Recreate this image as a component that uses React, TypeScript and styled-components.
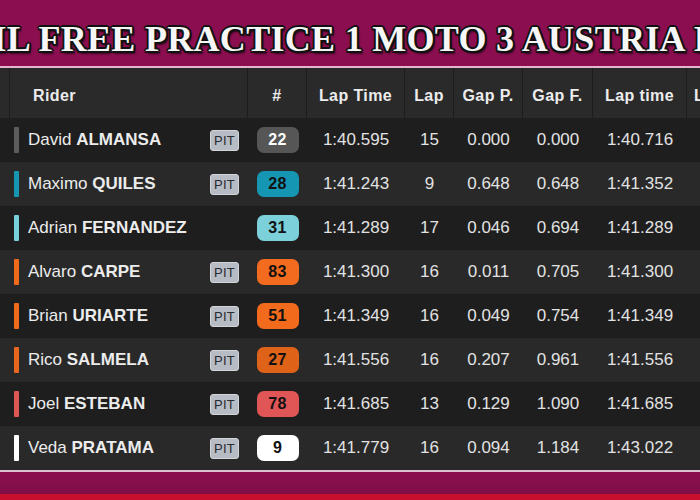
import React from "react";
import styled, { createGlobalStyle } from "styled-components";

const Global = createGlobalStyle`
  html, body { margin: 0; padding: 0; background: #8a0d4f; }
  body { width: 700px; height: 500px; overflow: hidden; font-family: "Liberation Sans", Arial, sans-serif; }
`;

const Page = styled.div`
  width: 700px;
  height: 500px;
  display: flex;
  flex-direction: column;
  overflow: hidden;
  background: #8a0d4f;
`;

const TitleBand = styled.div`
  height: 66px;
  flex: none;
  display: flex;
  justify-content: center;
  align-items: center;
  overflow: hidden;
  background: #8b0e50;
  border-bottom: 2px solid #e3b6cc;
`;

const Title = styled.h1`
  margin: 12px 0 0 0;
  flex: none;
  white-space: nowrap;
  font-family: "Liberation Serif", "Times New Roman", serif;
  font-weight: 700;
  font-size: 36px;
  letter-spacing: 0.3px;
  color: #f6f6f6;
  text-shadow:
    2px 0 0 #111, -2px 0 0 #111, 0 2px 0 #111, 0 -2px 0 #111,
    1.5px 1.5px 0 #111, -1.5px 1.5px 0 #111, 1.5px -1.5px 0 #111, -1.5px -1.5px 0 #111,
    2px 3px 2px rgba(0, 0, 0, 0.6);
`;

const COLS = "10px 238px 59px 98px 49px 69px 70px 94px 1fr";

const Table = styled.div`
  flex: none;
  display: flex;
  flex-direction: column;
  width: 700px;
`;

const HeadRow = styled.div`
  display: grid;
  grid-template-columns: ${COLS};
  height: 50px;
  background: #2a2a2a;
`;

const HeadCell = styled.div<{ $left?: boolean }>`
  display: flex;
  align-items: center;
  justify-content: ${(p) => (p.$left ? "flex-start" : "center")};
  padding-left: ${(p) => (p.$left ? "23px" : "0")};
  padding-top: 5px;
  border-right: 1px solid #1d1d1d;
  color: #ececec;
  font-weight: 700;
  font-size: 16px;
  letter-spacing: 0.4px;
  white-space: nowrap;
  overflow: hidden;
  &:last-child {
    justify-content: flex-start;
    padding-left: 7px;
    border-right: none;
  }
`;

const Row = styled.div<{ $alt: boolean }>`
  display: grid;
  grid-template-columns: ${COLS};
  height: 44px;
  background: ${(p) => (p.$alt ? "#292929" : "#1e1e1e")};
`;

const RiderCell = styled.div`
  display: flex;
  align-items: center;
  padding: 0 9px 0 4px;
`;

const Bar = styled.span<{ $c: string }>`
  width: 5px;
  height: 26px;
  border-radius: 1px;
  background: ${(p) => p.$c};
  flex: none;
`;

const Name = styled.span`
  margin-left: 9px;
  color: #ececec;
  font-size: 17px;
  white-space: nowrap;
  b { font-weight: 700; }
`;

const Pit = styled.span`
  margin-left: auto;
  width: 29px;
  height: 21px;
  box-sizing: border-box;
  display: flex;
  align-items: center;
  justify-content: center;
  background: #b7bbc3;
  border: 1px solid #d2d5da;
  border-radius: 3px;
  color: #262a32;
  font-size: 13px;
  letter-spacing: 0.2px;
`;

const NumCell = styled.div`
  display: flex;
  align-items: center;
  justify-content: center;
`;

const NumBadge = styled.span<{ $bg: string; $fg: string }>`
  width: 42px;
  height: 26px;
  border-radius: 7px;
  display: flex;
  align-items: center;
  justify-content: center;
  background: ${(p) => p.$bg};
  color: ${(p) => p.$fg};
  font-weight: 700;
  font-size: 16px;
  letter-spacing: 0.3px;
`;

const Cell = styled.div`
  display: flex;
  align-items: center;
  justify-content: center;
  color: #e2e2e2;
  font-size: 17px;
  white-space: nowrap;
`;

const BottomLine = styled.div`
  height: 2px;
  flex: none;
  background: #d9c2cd;
`;

const BottomBand = styled.div`
  flex: 1;
  background: linear-gradient(#8b0e4e, #800f48);
`;

const RedStrip = styled.div`
  height: 6px;
  flex: none;
  background: #c8102e;
`;

type R = {
  first: string; last: string; pit: boolean; num: string;
  bar: string; bg: string; fg: string;
  lt: string; lap: string; gp: string; gf: string; lt2: string;
};

const rows: R[] = [
  { first: "David", last: "ALMANSA", pit: true, num: "22", bar: "#5c5c5c", bg: "#565656", fg: "#ffffff", lt: "1:40.595", lap: "15", gp: "0.000", gf: "0.000", lt2: "1:40.716" },
  { first: "Maximo", last: "QUILES", pit: true, num: "28", bar: "#1596b3", bg: "#1597b4", fg: "#111111", lt: "1:41.243", lap: "9", gp: "0.648", gf: "0.648", lt2: "1:41.352" },
  { first: "Adrian", last: "FERNANDEZ", pit: false, num: "31", bar: "#7ad0da", bg: "#7bd0da", fg: "#111111", lt: "1:41.289", lap: "17", gp: "0.046", gf: "0.694", lt2: "1:41.289" },
  { first: "Alvaro", last: "CARPE", pit: true, num: "83", bar: "#f06a1c", bg: "#f36b1f", fg: "#111111", lt: "1:41.300", lap: "16", gp: "0.011", gf: "0.705", lt2: "1:41.300" },
  { first: "Brian", last: "URIARTE", pit: true, num: "51", bar: "#f06a1c", bg: "#f26a1c", fg: "#111111", lt: "1:41.349", lap: "16", gp: "0.049", gf: "0.754", lt2: "1:41.349" },
  { first: "Rico", last: "SALMELA", pit: true, num: "27", bar: "#e8661d", bg: "#df6219", fg: "#111111", lt: "1:41.556", lap: "16", gp: "0.207", gf: "0.961", lt2: "1:41.556" },
  { first: "Joel", last: "ESTEBAN", pit: true, num: "78", bar: "#de5656", bg: "#e05656", fg: "#111111", lt: "1:41.685", lap: "13", gp: "0.129", gf: "1.090", lt2: "1:41.685" },
  { first: "Veda", last: "PRATAMA", pit: true, num: "9", bar: "#ffffff", bg: "#ffffff", fg: "#111111", lt: "1:41.779", lap: "16", gp: "0.094", gf: "1.184", lt2: "1:43.022" },
];

export default function App() {
  return (
    <Page>
      <Global />
      <TitleBand>
        <Title>IL FREE PRACTICE 1 MOTO 3 AUSTRIA I</Title>
      </TitleBand>
      <Table>
        <HeadRow>
          <HeadCell />
          <HeadCell $left>Rider</HeadCell>
          <HeadCell>#</HeadCell>
          <HeadCell>Lap Time</HeadCell>
          <HeadCell>Lap</HeadCell>
          <HeadCell>Gap P.</HeadCell>
          <HeadCell>Gap F.</HeadCell>
          <HeadCell>Lap time</HeadCell>
          <HeadCell>Laps</HeadCell>
        </HeadRow>
        {rows.map((r, i) => (
          <Row key={r.num} $alt={i % 2 === 1}>
            <div />
            <RiderCell>
              <Bar $c={r.bar} />
              <Name>
                {r.first} <b>{r.last}</b>
              </Name>
              {r.pit && <Pit>PIT</Pit>}
            </RiderCell>
            <NumCell>
              <NumBadge $bg={r.bg} $fg={r.fg}>{r.num}</NumBadge>
            </NumCell>
            <Cell>{r.lt}</Cell>
            <Cell>{r.lap}</Cell>
            <Cell>{r.gp}</Cell>
            <Cell>{r.gf}</Cell>
            <Cell>{r.lt2}</Cell>
            <div />
          </Row>
        ))}
      </Table>
      <BottomLine />
      <BottomBand />
      <RedStrip />
    </Page>
  );
}
